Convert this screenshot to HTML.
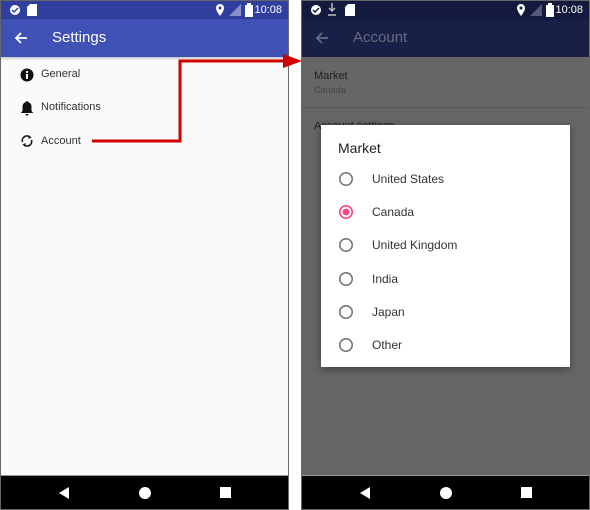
<!DOCTYPE html>
<html><head><meta charset="utf-8"><style>
*{margin:0;padding:0;box-sizing:border-box}
body{width:590px;height:510px;background:#fff;position:relative;overflow:hidden;font-family:"Liberation Sans",sans-serif}
.ph{position:absolute;top:0;width:289px;height:510px;border:1px solid #666;overflow:hidden}
.sb{position:absolute;left:0;top:0;right:0;height:18px}
.tb{position:absolute;left:0;top:18px;right:0;height:38px}
.nav{position:absolute;left:0;right:0;bottom:0;height:34px;background:#000;border-top:1px solid #999}
.t{position:absolute;white-space:nowrap}
.time{position:absolute;right:6px;top:3px;font-size:11px;color:#fff}
</style></head><body>
<!-- left phone -->
<div class="ph" style="left:0;background:#fafafa">
 <div class="sb" style="background:#303f9f">
  <svg class="t" style="left:8px;top:3px" width="12" height="12"><circle cx="6" cy="6" r="5" fill="#fff"/><path d="M3 6l2 2 4-4" stroke="#303f9f" stroke-width="1.5" fill="none"/></svg>
  <svg class="t" style="left:26px;top:3px" width="10" height="12"><path d="M3 0h7v12H0V3z" fill="#fff"/></svg>
  <svg class="t" style="left:214px;top:3px" width="10" height="12"><path d="M5 0a4 4 0 0 1 4 4c0 3-4 8-4 8S1 7 1 4a4 4 0 0 1 4-4z" fill="#fff"/><circle cx="5" cy="4" r="1.5" fill="#303f9f"/></svg>
  <svg class="t" style="left:226px;top:3px" width="14" height="12"><path d="M14 0v12H2z" fill="#8890c8"/></svg>
  <svg class="t" style="left:244px;top:2px" width="8" height="14"><rect x="0" y="2" width="8" height="12" fill="#fff"/><rect x="2" y="0" width="4" height="2" fill="#fff"/></svg>
  <span class="time">10:08</span>
 </div>
 <div class="tb" style="background:#3f51b5;box-shadow:0 1px 3px rgba(0,0,0,.3)">
  <svg class="t" style="left:13px;top:12px" width="14" height="14"><path d="M13 7H2M7 2L2 7l5 5" stroke="#fff" stroke-width="1.8" fill="none"/></svg>
  <span class="t" style="left:51px;top:10px;font-size:15px;color:#fff">Settings</span>
 </div>
 <svg class="t" style="left:19px;top:67px" width="14" height="14"><circle cx="7" cy="7" r="6.5" fill="#111"/><rect x="6" y="6" width="2" height="5" fill="#fff"/><circle cx="7" cy="4" r="1.1" fill="#fff"/></svg>
 <span class="t" style="left:40px;top:67px;font-size:11px;color:#333">General</span>
 <svg class="t" style="left:19px;top:99px" width="14" height="16"><path d="M7 1a1 1 0 0 1 1 1 4.5 4.5 0 0 1 3.5 4.5V11l1.5 1.5V13H1v-.5L2.5 11V6.5A4.5 4.5 0 0 1 6 2a1 1 0 0 1 1-1z" fill="#111"/><path d="M5.5 14h3a1.5 1.5 0 0 1-3 0z" fill="#111"/></svg>
 <span class="t" style="left:40px;top:100px;font-size:11px;color:#333">Notifications</span>
 <svg class="t" style="left:19px;top:133px" width="14" height="14"><path d="M2.5 8A4.6 4.6 0 0 1 10 3.2M11.5 6A4.6 4.6 0 0 1 4 10.8" stroke="#111" stroke-width="1.6" fill="none"/><path d="M8.5 1l3 2.5-3 1.5zM5.5 13l-3-2.5 3-1.5z" fill="#111"/></svg>
 <span class="t" style="left:40px;top:134px;font-size:11px;color:#333">Account</span>
 <div class="nav">
  <svg class="t" style="left:58px;top:11px" width="10" height="12"><path d="M10 0v12L0 6z" fill="#fff"/></svg>
  <svg class="t" style="left:138px;top:11px" width="12" height="12"><circle cx="6" cy="6" r="6" fill="#fff"/></svg>
  <svg class="t" style="left:219px;top:11px" width="11" height="11"><rect width="11" height="11" fill="#fff"/></svg>
 </div>
</div>
<!-- right phone -->
<div class="ph" style="left:301px;background:#666">
 <div class="sb" style="background:#141a3d">
  <svg class="t" style="left:8px;top:3px" width="12" height="12"><circle cx="6" cy="6" r="5" fill="#fff"/><path d="M3 6l2 2 4-4" stroke="#141a3d" stroke-width="1.5" fill="none"/></svg>
  <svg class="t" style="left:26px;top:2px" width="8" height="14"><path d="M4 0v8M1 5l3 3 3-3M0 12h8" stroke="#bbb" stroke-width="1.5" fill="none"/></svg>
  <svg class="t" style="left:43px;top:3px" width="10" height="12"><path d="M3 0h7v12H0V3z" fill="#fff"/></svg>
  <svg class="t" style="left:214px;top:3px" width="10" height="12"><path d="M5 0a4 4 0 0 1 4 4c0 3-4 8-4 8S1 7 1 4a4 4 0 0 1 4-4z" fill="#fff"/><circle cx="5" cy="4" r="1.5" fill="#141a3d"/></svg>
  <svg class="t" style="left:226px;top:3px" width="14" height="12"><path d="M14 0v12H2z" fill="#555a75"/></svg>
  <svg class="t" style="left:244px;top:2px" width="8" height="14"><rect x="0" y="2" width="8" height="12" fill="#fff"/><rect x="2" y="0" width="4" height="2" fill="#fff"/></svg>
  <span class="time">10:08</span>
 </div>
 <div class="tb" style="background:#192048">
  <svg class="t" style="left:13px;top:12px" width="14" height="14"><path d="M13 7H2M7 2L2 7l5 5" stroke="#666a80" stroke-width="1.8" fill="none"/></svg>
  <span class="t" style="left:51px;top:10px;font-size:15px;color:#666a80">Account</span>
 </div>
 <span class="t" style="left:12px;top:69px;font-size:11px;color:#222">Market</span>
 <span class="t" style="left:12px;top:84px;font-size:9px;color:#444">Canada</span>
 <div class="t" style="left:0;right:0;top:106px;height:1px;background:#5a5a5a"></div>
 <span class="t" style="left:12px;top:119px;font-size:11px;color:#222">Account settings</span>
 <div class="nav">
  <svg class="t" style="left:58px;top:11px" width="10" height="12"><path d="M10 0v12L0 6z" fill="#fff"/></svg>
  <svg class="t" style="left:138px;top:11px" width="12" height="12"><circle cx="6" cy="6" r="6" fill="#fff"/></svg>
  <svg class="t" style="left:219px;top:11px" width="11" height="11"><rect width="11" height="11" fill="#fff"/></svg>
 </div>
</div>
<!-- dialog -->
<div class="t" style="left:321px;top:125px;width:249px;height:242px;background:#fff;box-shadow:0 2px 8px rgba(0,0,0,.4)">
 <span class="t" style="left:17px;top:15px;font-size:14px;color:#222">Market</span>
 <svg class="t" style="left:0;top:0" width="249" height="242">
  <g fill="none" stroke="#757575" stroke-width="1.6">
   <circle cx="25" cy="54" r="6.2"/><circle cx="25" cy="120" r="6.2"/><circle cx="25" cy="154" r="6.2"/><circle cx="25" cy="187" r="6.2"/><circle cx="25" cy="220" r="6.2"/>
  </g>
  <circle cx="25" cy="87" r="6.2" fill="none" stroke="#ff4081" stroke-width="1.6"/><circle cx="25" cy="87" r="3.4" fill="#ff4081"/>
 </svg>
 <span class="t" style="left:51px;top:47px;font-size:12px;color:#333">United States</span>
 <span class="t" style="left:51px;top:80px;font-size:12px;color:#333">Canada</span>
 <span class="t" style="left:51px;top:113px;font-size:12px;color:#333">United Kingdom</span>
 <span class="t" style="left:51px;top:147px;font-size:12px;color:#333">India</span>
 <span class="t" style="left:51px;top:180px;font-size:12px;color:#333">Japan</span>
 <span class="t" style="left:51px;top:213px;font-size:12px;color:#333">Other</span>
</div>
<!-- arrow -->
<svg class="t" style="left:0;top:0" width="590" height="510">
 <path d="M92 141H180V61H286" stroke="#d00000" stroke-width="3" fill="none"/>
 <path d="M283 54L302 61L283 68z" fill="#d00000"/>
</svg>
</body></html>
